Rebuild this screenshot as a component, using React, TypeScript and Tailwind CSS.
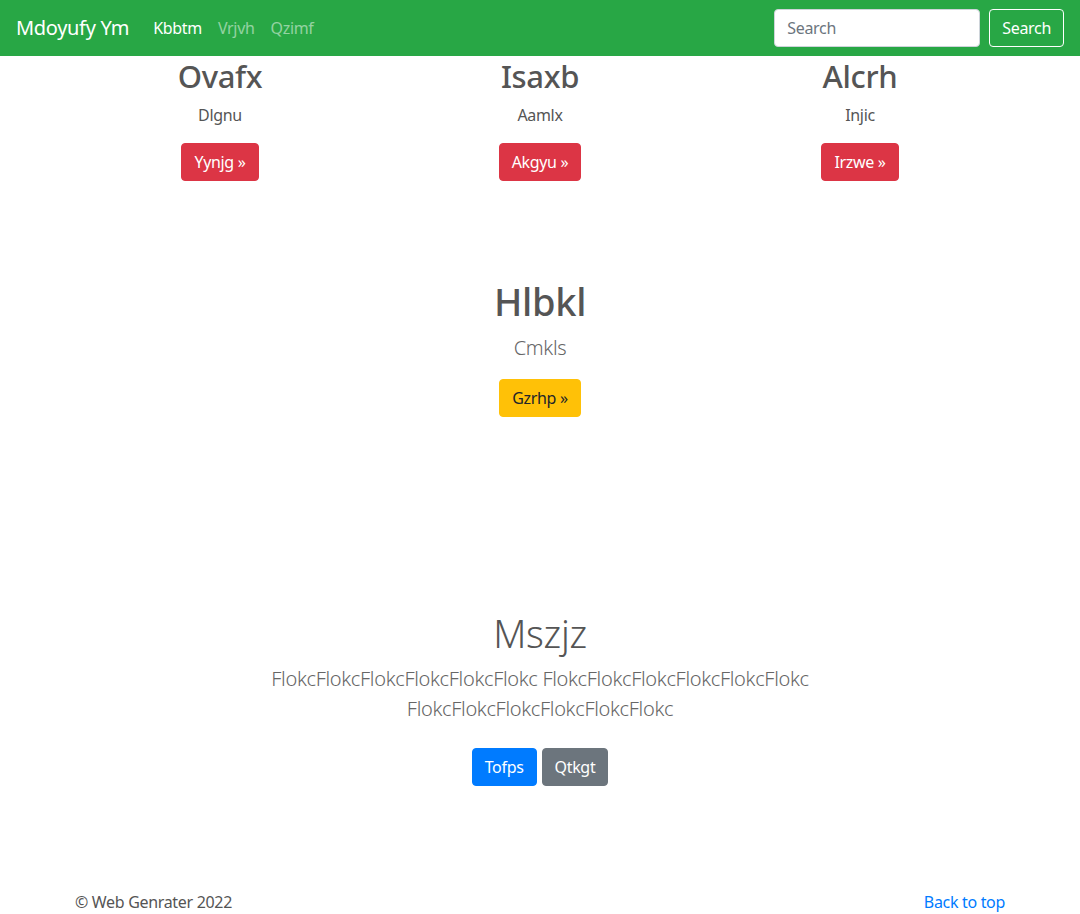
import React from "react";

const font = { fontFamily: '"Noto Sans", "Open Sans", Arial, sans-serif' };

const features = [
  { title: "Ovafx", text: "Dlgnu", cta: "Yynjg »" },
  { title: "Isaxb", text: "Aamlx", cta: "Akgyu »" },
  { title: "Alcrh", text: "Injic", cta: "Irzwe »" },
];

const flokc = "FlokcFlokcFlokcFlokcFlokcFlokc";

export default function App() {
  return (
    <div
      className="min-h-[914px] bg-white text-[#555] text-base leading-6 tracking-[-0.02em]"
      style={font}
    >
      {/* navbar */}
      <nav className="h-14 bg-[#28a745] flex items-center px-4">
        <a href="#" className="text-xl leading-[30px] text-white mr-4">
          Mdoyufy Ym
        </a>
        <ul className="flex items-center">
          <li>
            <a href="#" className="block px-2 text-white">
              Kbbtm
            </a>
          </li>
          <li>
            <a href="#" className="block px-2 text-white/50">
              Vrjvh
            </a>
          </li>
          <li>
            <a href="#" className="block px-2 text-white/50">
              Qzimf
            </a>
          </li>
        </ul>
        <form className="ml-auto flex items-center gap-[9px]">
          <input
            type="text"
            placeholder="Search"
            className="w-[206px] h-[38px] px-3 rounded bg-white border border-[#ced4da] text-[#495057] placeholder:text-[#6c757d] outline-none tracking-[-0.02em]"
          />
          <button
            type="button"
            className="h-[38px] px-3 rounded border border-white text-white tracking-[-0.02em]"
          >
            Search
          </button>
        </form>
      </nav>

      {/* feature columns */}
      <div className="w-[960px] mx-auto grid grid-cols-3 pt-0.5">
        {features.map((f) => (
          <div key={f.title} className="px-[15px] text-center">
            <h2 className="text-[31px] leading-[1.2] font-medium mb-2">
              {f.title}
            </h2>
            <p className="mb-4">{f.text}</p>
            <a
              href="#"
              className="inline-block px-3 py-1.5 rounded border border-[#dc3545] bg-[#dc3545] text-white"
            >
              {f.cta}
            </a>
          </div>
        ))}
      </div>

      {/* highlight */}
      <section className="text-center mt-[98px]">
        <h1 className="text-[38px] leading-[1.2] font-medium mb-2">Hlbkl</h1>
        <p className="text-xl leading-[30px] font-light text-[#666] mb-4">
          Cmkls
        </p>
        <a
          href="#"
          className="inline-block px-3 py-1.5 rounded border border-[#ffc107] bg-[#ffc107] text-[#212529]"
        >
          Gzrhp »
        </a>
      </section>

      {/* hero */}
      <section className="text-center mt-[194px]">
        <h1 className="text-[38px] leading-[1.2] font-light mb-2">Mszjz</h1>
        <p className="max-w-[610px] mx-auto text-xl leading-[30px] font-light text-[#666] mb-6">
          {flokc} {flokc} {flokc}
        </p>
        <div className="flex justify-center gap-[5px]">
          <a
            href="#"
            className="inline-block px-3 py-1.5 rounded border border-[#007bff] bg-[#007bff] text-white"
          >
            Tofps
          </a>
          <a
            href="#"
            className="inline-block px-3 py-1.5 rounded border border-[#6c757d] bg-[#6c757d] text-white"
          >
            Qtkgt
          </a>
        </div>
      </section>

      {/* footer */}
      <footer className="w-[960px] mx-auto px-[15px] mt-[104px] flex justify-between">
        <p>© Web Genrater 2022</p>
        <a href="#" className="text-[#007bff]">
          Back to top
        </a>
      </footer>
    </div>
  );
}
